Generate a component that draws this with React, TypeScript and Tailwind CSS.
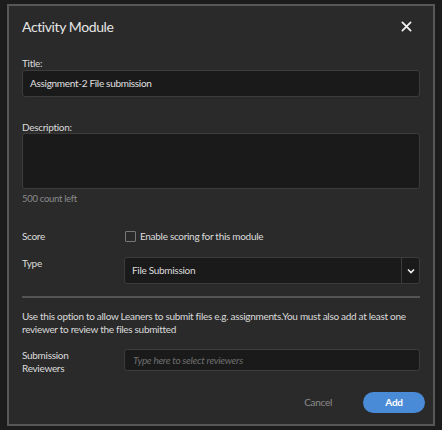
import React from "react";

export default function App() {
  return (
    <div
      className="w-[442px] h-[430px] bg-[#1c1c1c] pt-[4px] px-[7px] overflow-hidden tracking-[-0.3px]"
      style={{ fontFamily: "Lato, 'Liberation Sans', sans-serif" }}
    >
      <div className="w-[428px] h-[422px] border-2 border-[#575757] bg-[#2a2a2a] text-[#dcdcdc] flex flex-col px-[13px]">
        <div className="flex items-center justify-between h-[40px]">
          <div className="text-[14px] tracking-[-0.4px] text-[#e6e6e6]">Activity Module</div>
          <svg width="11" height="11" viewBox="0 0 12 12" className="mr-[8px]">
            <path d="M1.5 1.5 L10.5 10.5 M10.5 1.5 L1.5 10.5" stroke="#f2f2f2" strokeWidth="1.9" strokeLinecap="round" />
          </svg>
        </div>
        <div className="text-[10px] mt-[11px] leading-[13px] text-[#dadada]">Title:</div>
        <div className="h-[27px] border border-[#3c3c3c] rounded-[3px] bg-[#1a1a1a] flex items-center px-[7px] text-[10px] text-[#e0e0e0]">
          Assignment-2 File submission
        </div>
        <div className="text-[10px] mt-[24px] leading-[12px] text-[#dadada]">Description:</div>
        <div className="h-[56px] border border-[#3c3c3c] rounded-[3px] bg-[#1a1a1a]" />
        <div className="text-[9.5px] leading-[12px] mt-[4px] text-[#8a8a8a]">500 count left</div>
        <div className="flex items-center mt-[24px] h-[14px] text-[10px]">
          <div className="w-[103px]">Score</div>
          <div className="flex items-center gap-[4px]">
            <div className="w-[11px] h-[11px] border border-[#777] rounded-[1px]" />
            <span>Enable scoring for this module</span>
          </div>
        </div>
        <div className="flex mt-[14px] text-[10px]">
          <div className="w-[102px] leading-[13px]">Type</div>
          <div className="flex-1 h-[27px] border border-[#3c3c3c] rounded-[3px] bg-[#1a1a1a] flex items-center">
            <div className="flex-1 px-[7px]">File Submission</div>
            <div className="w-[18px] h-full border-l border-[#3c3c3c] flex items-center justify-center">
              <svg width="8" height="6" viewBox="0 0 8 6">
                <path d="M1 1.5 L4 4.5 L7 1.5" stroke="#f0f0f0" strokeWidth="1.6" fill="none" />
              </svg>
            </div>
          </div>
        </div>
        <div className="mt-[12px] h-[2px] bg-[#545454]" />
        <div className="mt-[12px] text-[10px] leading-[13px] text-[#dadada]">
          Use this option to allow Leaners to submit files e.g. assignments.You must also add at least one reviewer to review the files submitted
        </div>
        <div className="flex mt-[13px] text-[10px]">
          <div className="w-[102px] leading-[13px]">
            Submission
            <br />
            Reviewers
          </div>
          <div className="flex-1 h-[22px] border border-[#3c3c3c] rounded-[3px] bg-[#1a1a1a] flex items-center px-[8px] italic text-[#6e6e6e]">
            Type here to select reviewers
          </div>
        </div>
        <div className="flex items-center justify-end mt-[17px] mr-[-5px] text-[10px]">
          <span className="text-[#8c8c8c] mr-[31px]">Cancel</span>
          <div className="w-[62px] h-[21px] rounded-full bg-[#4a8bd8] text-white font-bold flex items-center justify-center">
            Add
          </div>
        </div>
      </div>
    </div>
  );
}
